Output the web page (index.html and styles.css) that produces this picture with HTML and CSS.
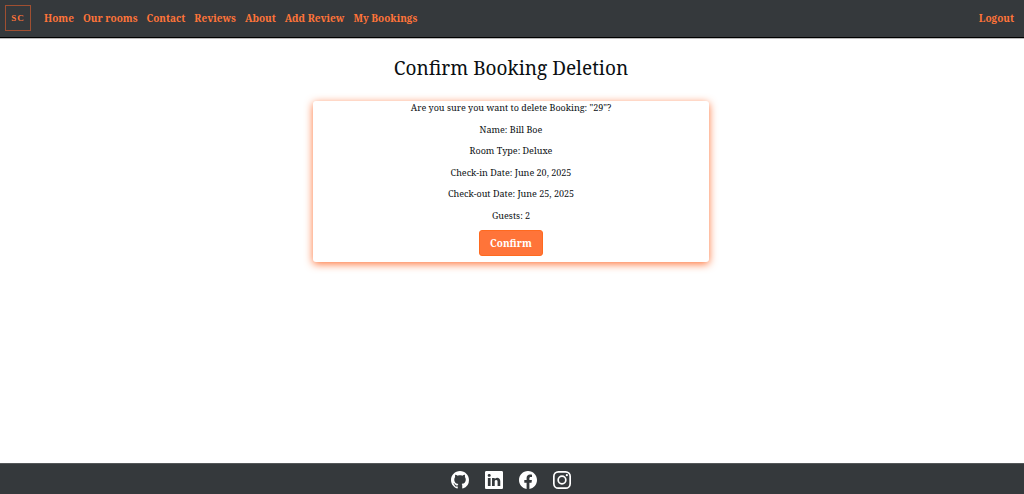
FILE: index.html
```html
<!DOCTYPE html>
<html lang="en">
<head>
<meta charset="utf-8">
<meta name="viewport" content="width=device-width, initial-scale=1">
<title>Confirm Booking Deletion</title>
<link rel="stylesheet" href="styles.css">
</head>
<body>
<header class="navbar">
  <a class="brand" href="#">SC</a>
  <nav class="nav-links">
    <a href="#">Home</a>
    <a href="#">Our rooms</a>
    <a href="#">Contact</a>
    <a href="#">Reviews</a>
    <a href="#">About</a>
    <a href="#">Add Review</a>
    <a href="#">My Bookings</a>
  </nav>
  <a class="logout" href="#">Logout</a>
</header>
<main class="content">
  <h1>Confirm Booking Deletion</h1>
  <form class="card">
    <p>Are you sure you want to delete Booking: "29"?</p>
    <p>Name: Bill Boe</p>
    <p>Room Type: Deluxe</p>
    <p>Check-in Date: June 20, 2025</p>
    <p>Check-out Date: June 25, 2025</p>
    <p>Guests: 2</p>
    <button class="confirm" type="button">Confirm</button>
  </form>
</main>
<footer class="footer">
  <a href="#" aria-label="GitHub"><svg viewBox="0 0 16 16"><path d="M8 0C3.58 0 0 3.58 0 8c0 3.54 2.29 6.53 5.47 7.59.4.07.55-.17.55-.38 0-.19-.01-.82-.01-1.49-2.01.37-2.53-.49-2.69-.94-.09-.23-.48-.94-.82-1.13-.28-.15-.68-.52-.01-.53.63-.01 1.08.58 1.23.82.72 1.21 1.87.87 2.33.66.07-.52.28-.87.51-1.07-1.78-.2-3.64-.89-3.64-3.95 0-.87.31-1.59.82-2.15-.08-.2-.36-1.02.08-2.12 0 0 .67-.21 2.2.82.64-.18 1.32-.27 2-.27s1.36.09 2 .27c1.53-1.04 2.2-.82 2.2-.82.44 1.1.16 1.92.08 2.12.51.56.82 1.27.82 2.15 0 3.07-1.87 3.75-3.65 3.95.29.25.54.73.54 1.48 0 1.07-.01 1.93-.01 2.2 0 .21.15.46.55.38A8.01 8.01 0 0 0 16 8c0-4.42-3.58-8-8-8"/></svg></a>
  <a href="#" aria-label="LinkedIn"><svg viewBox="0 0 16 16"><path d="M0 1.146C0 .513.526 0 1.175 0h13.65C15.474 0 16 .513 16 1.146v13.708c0 .633-.526 1.146-1.175 1.146H1.175C.526 16 0 15.487 0 14.854zm4.943 12.248V6.169H2.542v7.225zm-1.2-8.212c.837 0 1.358-.554 1.358-1.248-.015-.709-.52-1.248-1.342-1.248S2.4 3.226 2.4 3.934c0 .694.521 1.248 1.327 1.248zm4.908 8.212V9.359c0-.216.016-.432.08-.586.173-.431.568-.878 1.232-.878.869 0 1.216.662 1.216 1.634v3.865h2.401V9.25c0-2.22-1.184-3.252-2.764-3.252-1.274 0-1.845.7-2.165 1.193v.025h-.016l.016-.025V6.169h-2.4c.03.678 0 7.225 0 7.225z"/></svg></a>
  <a href="#" aria-label="Facebook"><svg viewBox="0 0 16 16"><path d="M16 8.049c0-4.446-3.582-8.05-8-8.05C3.58 0 0 3.603 0 8.05c0 4.017 2.926 7.347 6.75 7.951v-5.625H4.719V8.05H6.75V6.275c0-2.017 1.195-3.131 3.022-3.131.876 0 1.791.157 1.791.157v1.98h-1.009c-.993 0-1.303.621-1.303 1.258v1.51h2.218l-.354 2.326H9.25V16c3.824-.604 6.75-3.934 6.75-7.951"/></svg></a>
  <a href="#" aria-label="Instagram"><svg viewBox="0 0 16 16"><rect class="stroke" x=".75" y=".75" width="14.5" height="14.5" rx="4"/><circle class="stroke" cx="8" cy="8" r="3.4"/><circle cx="12.3" cy="3.7" r="1"/></svg></a>
</footer>
</body>
</html>
```
FILE: styles.css
```css
* {
  box-sizing: border-box;
}

body {
  margin: 0;
  min-height: 100vh;
  display: flex;
  flex-direction: column;
  background: #fff;
  color: #0b0f12;
  font-family: "Noto Serif", "DejaVu Serif", serif;
  font-size: 9px;
  line-height: 13px;
}

a {
  color: #ff7439;
  text-decoration: none;
}

.navbar {
  display: flex;
  align-items: center;
  height: 38px;
  padding: 0 10px 1px 5px;
  background: #35393c;
  border-bottom: 1px solid #000;
  box-shadow: 0 1px 0 #bbb;
  font-size: 10px;
  font-weight: 700;
}

.brand {
  width: 26px;
  height: 26px;
  margin-right: 13px;
  border: 1px solid #a04f31;
  font-family: "Liberation Serif", serif;
  font-size: 9px;
  line-height: 25px;
  letter-spacing: 1px;
  text-align: center;
}

.nav-links {
  display: flex;
  gap: 9px;
}

.logout {
  margin-left: auto;
}

.content {
  flex: 1;
  display: flex;
  flex-direction: column;
  align-items: center;
  padding-right: 2px;
}

h1 {
  margin: 17px 0 20px;
  font-size: 19px;
  font-weight: 400;
  line-height: 26px;
}

.card {
  display: flex;
  flex-direction: column;
  align-items: center;
  justify-content: space-between;
  width: calc(39% - 2px);
  min-width: 240px;
  min-height: 161px;
  padding-bottom: 6px;
  border-radius: 3px;
  background: #fff;
  box-shadow: 0 2px 8px #ff7439;
}

.card p {
  margin: 0;
}

.confirm {
  height: 26px;
  padding: 0 10px;
  border: 1px solid #ff6a1f;
  border-radius: 3px;
  background: #ff7439;
  color: #fff;
  font: inherit;
  font-size: 10px;
  font-weight: 700;
}

.footer {
  display: flex;
  justify-content: center;
  gap: 16px;
  height: 31px;
  padding: 7px 2px 0 0;
  border-top: 1px solid #55585a;
  background: #35393c;
}

.footer svg {
  display: block;
  width: 18px;
  height: 18px;
  fill: #fff;
}

.footer .stroke {
  fill: none;
  stroke: #fff;
  stroke-width: 1.5;
}
```
